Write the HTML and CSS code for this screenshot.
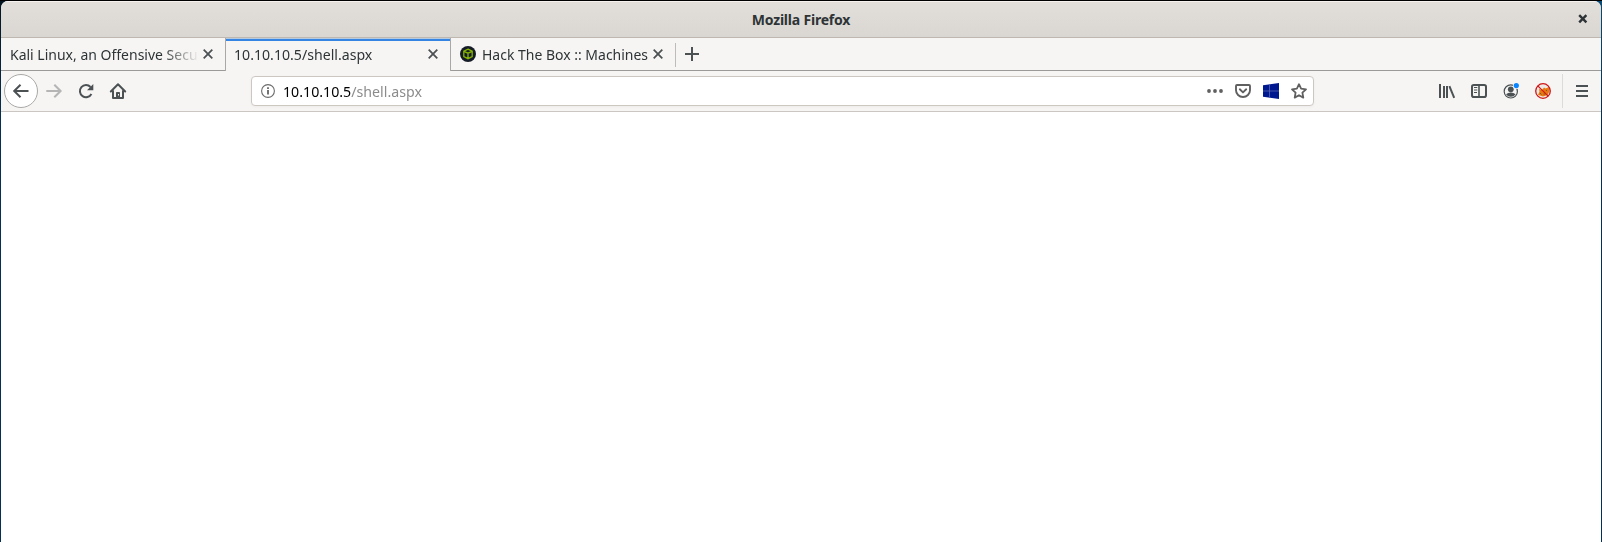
FILE: index.html
```
<!DOCTYPE html>
<html lang="en">
<head>
<meta charset="utf-8">
<title>Mozilla Firefox</title>
<link rel="stylesheet" href="styles.css">
</head>
<body>
<div class="window">
  <header class="titlebar">
    <span class="title">Mozilla Firefox</span>
    <svg class="win-close" width="10" height="10" viewBox="0 0 10 10"><path d="M1.2 1.2l7.2 7.2M8.4 1.2L1.2 8.4" stroke="#2e3436" stroke-width="2.4"/></svg>
  </header>
  <nav class="tabs">
    <div class="tab first">
      <span class="label kali">Kali Linux, an Offensive Secu</span>
      <svg class="close" width="10" height="10" viewBox="0 0 10 10"><path d="M.7.7l8.6 8.6M9.3.7L.7 9.3" stroke="#4c5254" stroke-width="1.8"/></svg>
    </div>
    <div class="tab active">
      <span class="label shell">10.10.10.5/shell.aspx</span>
      <svg class="close" width="10" height="10" viewBox="0 0 10 10"><path d="M.7.7l8.6 8.6M9.3.7L.7 9.3" stroke="#4c5254" stroke-width="1.8"/></svg>
    </div>
    <div class="tab last">
      <svg class="favicon" width="16" height="16" viewBox="0 0 16 16"><circle cx="8" cy="8" r="8" fill="#161c27"/><path d="M8 3.2l4.2 2v5.3L8 12.7l-4.2-2.2V5.2zM3.8 5.3L8 7.2l4.2-1.9M8 7.2v5.4" fill="none" stroke="#86b300" stroke-width="1.3"/></svg>
      <span class="label hack">Hack The Box :: Machines</span>
      <svg class="close" width="10" height="10" viewBox="0 0 10 10"><path d="M.7.7l8.6 8.6M9.3.7L.7 9.3" stroke="#4c5254" stroke-width="1.8"/></svg>
    </div>
    <div class="newtab">
      <svg width="14" height="14" viewBox="0 0 14 14"><path d="M7 0v14M0 7h14" stroke="#4c5254" stroke-width="2"/></svg>
    </div>
  </nav>
  <div class="toolbar">
    <div class="nav">
      <span class="back"><svg width="16" height="16" viewBox="0 0 16 16"><path d="M15.5 8H1.5M7.5 1.7L1.2 8l6.3 6.3" fill="none" stroke="#4c5254" stroke-width="2"/></svg></span>
      <svg width="16" height="16" viewBox="0 0 16 16"><path d="M.3 8h14M8.3 1.7L14.6 8l-6.3 6.3" fill="none" stroke="#b4b5b4" stroke-width="2"/></svg>
      <svg width="16" height="16" viewBox="0 0 16 16"><path d="M13.4 11A6.1 6.1 0 1 1 12.5 4" fill="none" stroke="#4c5254" stroke-width="2"/><path d="M15.3 1v6.2H9z" fill="#4c5254"/></svg>
      <svg width="16" height="16" viewBox="0 0 16 16"><path d="M.8 8.5L8 1.3l7.2 7.2M3 8v7h10V8" fill="none" stroke="#4c5254" stroke-width="2" stroke-linejoin="round" stroke-linecap="round"/><path d="M6 15V9.7Q6 9 6.7 9h2.6q.7 0 .7.7V15z" fill="#4c5254"/><path d="M8.5 11v1.5" stroke="#f6f5f4" stroke-width="1"/></svg>
    </div>
    <div class="urlbar">
      <svg class="info" width="14" height="14" viewBox="0 0 14 14"><circle cx="7" cy="7" r="6.4" fill="none" stroke="#6b6b6b" stroke-width="1.1"/><path d="M7 6v4.6M7 3.2V5" stroke="#5c5c5c" stroke-width="1.7"/></svg>
      <span class="url"><span class="host">10.10.10.5</span>/shell.aspx</span>
      <div class="actions">
        <svg width="16" height="16" viewBox="0 0 16 16"><g fill="#606060"><circle cx="2" cy="8" r="1.9"/><circle cx="8" cy="8" r="1.9"/><circle cx="14" cy="8" r="1.9"/></g></svg>
        <svg width="16" height="16" viewBox="0 0 16 16"><path d="M2 2h12q1 0 1 1v4.2a7 6.8 0 0 1-14 0V3q0-1 1-1z" fill="none" stroke="#606060" stroke-width="1.9"/><path d="M4.8 6.3L8 9.4l3.2-3.1" fill="none" stroke="#606060" stroke-width="1.9" stroke-linecap="round" stroke-linejoin="round"/></svg>
        <svg width="16" height="16" viewBox="0 0 16 16"><path d="M0 2.2L16 0v16L0 13.8z" fill="#00188f"/><path d="M6.5 1v14M0 8h16" stroke="#5965b3" stroke-width=".8"/></svg>
        <svg width="16" height="16" viewBox="0 0 16 16"><path d="M8 1.2l2.1 4.5 4.9.6-3.6 3.4.9 4.9L8 12.2l-4.3 2.4.9-4.9L1 6.3l4.9-.6z" fill="none" stroke="#606060" stroke-width="1.8" stroke-linejoin="round"/></svg>
      </div>
    </div>
    <div class="tools">
      <svg width="16" height="16" viewBox="0 0 16 16"><path d="M1 1v14M5 3v12M8 3v12" stroke="#4c5254" stroke-width="2"/><path d="M10.4 3.2l4.8 11.6" stroke="#4c5254" stroke-width="2"/></svg>
      <svg width="16" height="16" viewBox="0 0 16 16"><rect x="1" y="2" width="14" height="12" rx="1.8" fill="none" stroke="#4c5254" stroke-width="2"/><path d="M8 2v12" stroke="#4c5254" stroke-width="1.6"/><path d="M3 4.5h3.3M3 7h3.3M3 9.5h3" stroke="#4c5254"/></svg>
      <svg width="16" height="16" viewBox="0 0 16 16"><circle cx="7.8" cy="8.4" r="6.6" fill="none" stroke="#4c5254" stroke-width="1.2"/><circle cx="7.8" cy="6.3" r="2.9" fill="#4c5254"/><path d="M3 11.2q2-1.8 4.8-1.8t4.8 1.8q-1.8 2.5-4.8 2.5t-4.8-2.5z" fill="#4c5254"/><circle cx="13.3" cy="2.6" r="3.4" fill="#f6f5f4"/><circle cx="13.3" cy="2.6" r="2.6" fill="#0a84ff"/></svg>
      <svg width="16" height="16" viewBox="0 0 16 16"><circle cx="8" cy="8" r="7.3" fill="#eee8e4"/><path d="M3 12l1.5-3.5L4 6l3 1 2-2.5 1.5 1L14 4l.5 4-1.8 4-4.7 1.5-3-1z" fill="#e87911"/><path d="M5 10l1.5 1.5M8.5 11h2M11 7l1 1" stroke="#76502c" stroke-width=".9"/><circle cx="8" cy="8" r="7.3" fill="none" stroke="#cf1616" stroke-width="1.3"/><path d="M2.8 2.8l10.4 10.4" stroke="#cf1616" stroke-width="1.2"/></svg>
    </div>
    <div class="menu"><svg width="12" height="12" viewBox="0 0 12 12"><path d="M0 1h12M0 6h12M0 11h12" stroke="#4c5254" stroke-width="2"/></svg></div>
  </div>
  <main class="page"></main>
</div>
</body>
</html>
```
FILE: styles.css
```
* { box-sizing: border-box; }
body {
  margin: 0;
  height: 542px;
  padding: 1px 1px 0;
  overflow: hidden;
  background:
    linear-gradient(#000 0 1px, transparent 1px),
    linear-gradient(#051522, #053052 120px) 0 0 / 50% 100% no-repeat,
    linear-gradient(#0d4a72, #053052 120px);
  font: 15px "Noto Sans", sans-serif;
  color: #2e3436;
}
svg { display: block; flex: none; overflow: visible; }
.window { height: 541px; display: flex; flex-direction: column; border-radius: 7px 7px 0 0; overflow: hidden; background: #fff; }
.titlebar {
  height: 37px;
  display: flex;
  align-items: center;
  justify-content: center;
  background: linear-gradient(#e2deda, #dad6d2);
  border-top: 1px solid #f5f2f0;
  border-bottom: 1px solid #bfb8b1;
  position: relative;
}
.title { font-size: 14px; font-weight: 700; letter-spacing: -.2px; }
.win-close { position: absolute; right: 13px; top: 12px; }
.tabs { height: 33px; display: flex; background: #f6f5f4; flex: none; }
.tab { display: flex; align-items: center; padding-bottom: 1px; border-bottom: 1px solid #9b9a98; }
.tab.first { width: 224px; padding-left: 9px; padding-right: 12px; }
.tab.active { width: 226px; padding: 0 12px 2px 8px; border: 1px solid #a9a8a6; border-top: 0; border-bottom: 0; box-shadow: inset 0 1px #b5c9df, inset 0 3px #3584e4; }
.tab.last { width: 224px; padding-left: 9px; padding-right: 12px; }
.label { white-space: nowrap; line-height: 22px; transform-origin: 0 50%; }
.kali { flex: none; width: 204px; margin-right: -17px; transform: scaleX(.933); mask-image: linear-gradient(90deg, #000 164px, transparent 203px); }
.shell { width: 139px; transform: scaleX(.942); }
.hack { width: 166px; transform: scaleX(.932); }
.close { margin-left: auto; }
.favicon { margin-right: 6px; }
.newtab { flex: 1; display: flex; align-items: center; padding: 0 0 1px 10px; border-bottom: 1px solid #9b9a98; background: linear-gradient(#bebbb8, #bebbb8) 0 5px / 1px 24px no-repeat; }
.toolbar { height: 41px; flex: none; display: flex; align-items: center; background: #f6f5f4; border-bottom: 1px solid #cbc6c1; }
.nav { width: 250px; display: flex; align-items: center; gap: 16px; padding-left: 3px; }
.back { width: 34px; height: 34px; margin-right: -8px; display: grid; place-items: center; border: 1px solid #aaa9a7; border-radius: 50%; background: #fff; }
.urlbar { width: 1063px; height: 30px; display: flex; align-items: center; padding: 0 6px 0 9px; background: #fff; border: 1px solid #cdc7c2; border-radius: 4px; box-shadow: 0 1px 3px #0000000a; }
.url { margin-left: 8px; white-space: nowrap; color: #8c8c8c; line-height: 22px; transform: scaleX(.946); transform-origin: 0 50%; }
.host { color: #000; }
.actions { display: flex; gap: 12px; margin-left: auto; }
.tools { display: flex; gap: 16px; margin-left: auto; }
.menu { width: 39px; height: 34px; margin-left: 11px; border-left: 1px solid #dddbd9; display: flex; align-items: center; padding-left: 13px; }
.page { flex: 1; background: #fff; }
```
